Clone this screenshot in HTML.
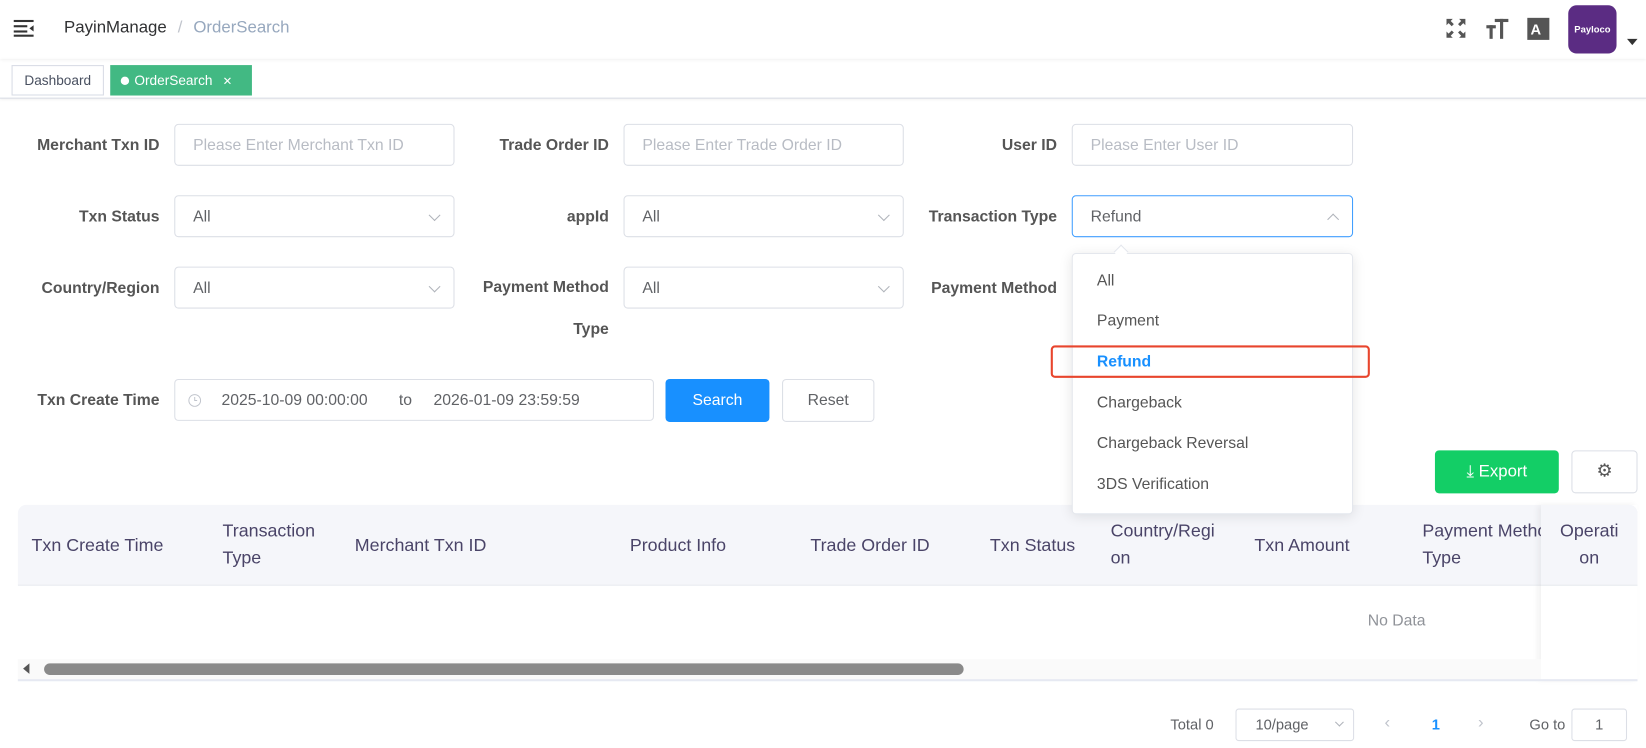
<!DOCTYPE html>
<html><head><meta charset="utf-8"><style>
*{box-sizing:border-box;margin:0;padding:0}
html,body{width:1646px;height:748px;overflow:hidden;background:#fff}
#w{position:absolute;left:0;top:0;width:1568px;height:713px;transform:scale(1.0497);transform-origin:0 0;font-family:"Liberation Sans",Arial,sans-serif;color:#606266;font-size:14px}
.a{position:absolute}
.lbl{position:absolute;font-weight:bold;color:#555;font-size:15px;text-align:right}
.inp{position:absolute;border:1px solid #dcdfe6;border-radius:4px;height:40px;background:#fff;font-size:15px;padding-left:17px;line-height:40px;color:#606266}
.ph{color:#b8bcc4}
.chev{position:absolute;right:14px;top:14px;width:8px;height:8px;border-right:1.3px solid #b0b4bb;border-bottom:1.3px solid #b0b4bb;transform:rotate(45deg)}
.th{position:absolute;font-size:17px;color:#4a4468;line-height:26px}
.item{position:absolute;left:1045px;font-size:15px;color:#555}
</style></head><body><div id="w">
<div class="a" style="left:0;top:0;width:1568px;height:56px;box-shadow:0 1px 3px rgba(0,0,0,.06)"></div>
<svg class="a" style="left:13px;top:18px" width="22" height="18" viewBox="0 0 22 18"><rect x="0" y="1" width="19" height="2" fill="#333"/><rect x="0" y="6" width="13" height="2" fill="#333"/><rect x="0" y="11" width="13" height="2" fill="#333"/><rect x="0" y="15" width="19" height="2" fill="#333"/><path d="M19 6 L15 9 L19 12Z" fill="#333"/></svg>
<div class="a" style="left:61px;top:18px;font-size:16px;color:#303133">PayinManage <span style="color:#c0c4cc;margin:0 6px">/</span> <span style="color:#97a8be">OrderSearch</span></div>
<svg class="a" style="left:1377px;top:17px" width="20" height="20" viewBox="0 0 20 20" fill="#555"><path d="M1 1h6l-2 2 3 3-2 2-3-3-2 2z M19 1h-6l2 2-3 3 2 2 3-3 2 2z M1 19h6l-2-2 3-3-2-2-3 3-2-2z M19 19h-6l2-2-3-3 2-2 3 3 2-2z"/></svg>
<svg class="a" style="left:1415px;top:16px" width="22" height="22" viewBox="0 0 22 22" fill="#555"><rect x="1" y="8" width="9" height="3"/><rect x="4" y="8" width="3" height="13"/><rect x="9" y="2" width="13" height="3"/><rect x="14" y="2" width="3" height="19"/></svg>
<div class="a" style="left:1455px;top:17px;width:21px;height:21px;background:#555;color:#fff;font-weight:bold;font-size:14px;line-height:22px;padding-left:3px">A<span style="font-size:8px;vertical-align:top;line-height:10px">文</span></div>
<div class="a" style="left:1494px;top:5px;width:46px;height:46px;border-radius:8px;background:#5b2c83;color:#fff;font-size:9px;font-weight:bold;text-align:center;line-height:46px">Payloco</div>
<div class="a" style="left:1550px;top:37px;border:5px solid transparent;border-top:6px solid #333;border-bottom:0"></div>
<div class="a" style="left:0;top:56px;width:1568px;height:38px;border-bottom:1px solid #d8dce5;box-shadow:0 1px 3px rgba(0,0,0,.08)"></div>
<div class="a" style="left:11px;top:62px;width:88px;height:29px;border:1px solid #d8dce5;font-size:13px;color:#495060;line-height:27px;text-align:center">Dashboard</div>
<div class="a" style="left:105px;top:62px;width:135px;height:29px;background:#42b983;color:#fff;font-size:13px;line-height:29px;padding-left:10px"><span style="display:inline-block;width:8px;height:8px;border-radius:50%;background:#fff;margin-right:5px"></span>OrderSearch <span style="font-size:11px;margin-left:6px">✕</span></div>

<div class="lbl" style="left:0;width:152px;top:130px">Merchant Txn ID</div>
<div class="inp ph" style="left:166px;top:118px;width:267px">Please Enter Merchant Txn ID</div>
<div class="lbl" style="left:400px;width:180px;top:130px">Trade Order ID</div>
<div class="inp ph" style="left:594px;top:118px;width:267px">Please Enter Trade Order ID</div>
<div class="lbl" style="left:850px;width:157px;top:130px">User ID</div>
<div class="inp ph" style="left:1021px;top:118px;width:268px">Please Enter User ID</div>

<div class="lbl" style="left:0;width:152px;top:198px">Txn Status</div>
<div class="inp" style="left:166px;top:186px;width:267px">All<i class="chev"></i></div>
<div class="lbl" style="left:400px;width:180px;top:198px">appId</div>
<div class="inp" style="left:594px;top:186px;width:267px">All<i class="chev"></i></div>
<div class="lbl" style="left:850px;width:157px;top:198px">Transaction Type</div>
<div class="inp" style="left:1021px;top:186px;width:268px;border-color:#409eff">Refund<i class="chev" style="transform:rotate(-135deg);top:18px"></i></div>

<div class="lbl" style="left:0;width:152px;top:266px">Country/Region</div>
<div class="inp" style="left:166px;top:254px;width:267px">All<i class="chev"></i></div>
<div class="lbl" style="left:400px;width:180px;top:254px;line-height:40px">Payment Method<br>Type</div>
<div class="inp" style="left:594px;top:254px;width:267px">All<i class="chev"></i></div>
<div class="lbl" style="left:850px;width:157px;top:266px">Payment Method</div>

<div class="lbl" style="left:0;width:152px;top:373px">Txn Create Time</div>
<div class="inp" style="left:166px;top:361px;width:457px;padding-left:0">
<svg class="a" style="left:12px;top:13px" width="13" height="13" viewBox="0 0 14 14"><circle cx="7" cy="7" r="6" fill="none" stroke="#c0c4cc"/><path d="M7 3.5V7h2.5" fill="none" stroke="#c0c4cc"/></svg>
<span class="a" style="left:44px">2025-10-09 00:00:00</span><span class="a" style="left:213px">to</span><span class="a" style="left:246px">2026-01-09 23:59:59</span></div>
<div class="a" style="left:634px;top:361px;width:99px;height:41px;background:#1890ff;border-radius:4px;color:#fff;font-size:15px;text-align:center;line-height:41px">Search</div>
<div class="a" style="left:745px;top:361px;width:88px;height:41px;border:1px solid #dcdfe6;border-radius:4px;color:#606266;font-size:15px;text-align:center;line-height:39px">Reset</div>

<div class="a" style="left:1367px;top:429px;width:118px;height:41px;background:#13ce66;border-radius:4px;color:#fff;font-size:16px;line-height:41px;text-align:center">⤓ Export</div>
<div class="a" style="left:1497px;top:429px;width:63px;height:41px;border:1px solid #dcdfe6;border-radius:4px;text-align:center;line-height:38px;color:#555;font-size:17px">⚙</div>

<div class="a" style="left:17px;top:481px;width:1543px;height:77px;background:#f5f6fa;border-radius:8px 8px 0 0;border-bottom:1px solid #e4e7ed"></div>
<div class="th" style="left:30px;top:507px">Txn Create Time</div>
<div class="th" style="left:212px;top:493px">Transaction<br>Type</div>
<div class="th" style="left:338px;top:507px">Merchant Txn ID</div>
<div class="th" style="left:600px;top:507px">Product Info</div>
<div class="th" style="left:772px;top:507px">Trade Order ID</div>
<div class="th" style="left:943px;top:507px">Txn Status</div>
<div class="th" style="left:1058px;top:493px">Country/Regi<br>on</div>
<div class="th" style="left:1195px;top:507px">Txn Amount</div>
<div class="th" style="left:1355px;top:493px;width:113px;overflow:hidden;white-space:nowrap">Payment Method<br>Type</div>
<div class="a" style="left:1468px;top:481px;width:92px;height:167px;box-shadow:-3px 0 6px rgba(0,0,0,.06)"></div>
<div class="a" style="left:1468px;top:481px;width:92px;height:77px;background:#f5f6fa;border-radius:0 8px 0 0;border-bottom:1px solid #e4e7ed"></div>
<div class="th" style="left:1468px;width:92px;text-align:center;top:493px">Operati<br>on</div>
<div class="a" style="left:1303px;top:583px;font-size:15px;color:#909399">No Data</div>
<div class="a" style="left:17px;top:628px;width:1451px;height:19px;background:#fafafa"></div>
<div class="a" style="left:22px;top:632px;border:5px solid transparent;border-right:6px solid #555;border-left:0"></div>
<div class="a" style="left:42px;top:632px;width:876px;height:11px;border-radius:6px;background:#8a8a8a"></div>
<div class="a" style="left:17px;top:647px;width:1543px;height:2px;background:#e6e9f2"></div>

<div class="a" style="left:1115px;top:682px;font-size:14px;color:#606266">Total 0</div>
<div class="a" style="left:1177px;top:675px;width:113px;height:31px;border:1px solid #dcdfe6;border-radius:3px;font-size:14px;line-height:29px;padding-left:18px">10/page<i class="chev" style="top:9px;right:10px;width:6px;height:6px"></i></div>
<div class="a" style="left:1319px;top:680px;color:#c0c4cc;font-size:16px">‹</div>
<div class="a" style="left:1364px;top:682px;color:#1890ff;font-weight:bold;font-size:14px">1</div>
<div class="a" style="left:1408px;top:680px;color:#c0c4cc;font-size:16px">›</div>
<div class="a" style="left:1457px;top:682px;font-size:14px">Go to</div>
<div class="a" style="left:1497px;top:675px;width:53px;height:31px;border:1px solid #dcdfe6;border-radius:3px;text-align:center;line-height:29px;font-size:14px">1</div>

<div class="a" style="left:1021px;top:241px;width:268px;height:249px;background:#fff;border:1px solid #e4e7ed;border-radius:4px;box-shadow:0 2px 12px rgba(0,0,0,.1)"></div>
<div class="a" style="left:1063px;top:235px;width:10px;height:10px;background:#fff;border-left:1px solid #e4e7ed;border-top:1px solid #e4e7ed;transform:rotate(45deg)"></div>
<div class="item" style="top:259px">All</div>
<div class="item" style="top:297px">Payment</div>
<div class="item" style="top:336px;color:#1890ff;font-weight:bold">Refund</div>
<div class="item" style="top:375px">Chargeback</div>
<div class="item" style="top:414px">Chargeback Reversal</div>
<div class="item" style="top:453px">3DS Verification</div>
<div class="a" style="left:1001px;top:329px;width:304px;height:31px;border:2.5px solid #e8452d;border-radius:4px"></div>
</div></body></html>
